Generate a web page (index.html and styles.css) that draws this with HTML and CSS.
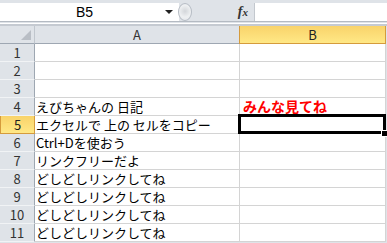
FILE: index.html
```html
<!DOCTYPE html>
<html>
<head>
    <title>Sheet1</title>
    <link rel="stylesheet" href="styles.css">
</head>
<body>
    <div class="bar">
        <div class="namebox">
            <span class="name">B5</span>
            <span class="arrow"></span>
        </div>
        <div class="splitter"></div>
        <div class="fx">f<i>x</i></div>
        <div class="formula"></div>
    </div>
    <div class="bar-line"></div>

    <div class="sheet">
        <div class="hd corner"><span class="tri"></span></div>
        <div class="hd col">A</div>
        <div class="hd col sel">B</div>

        <div class="hd row">1</div><div class="cell"></div><div class="cell"></div>
        <div class="hd row">2</div><div class="cell"></div><div class="cell"></div>
        <div class="hd row">3</div><div class="cell"></div><div class="cell"></div>
        <div class="hd row">4</div><div class="cell">えびちゃんの 日記</div><div class="cell note">みんな見てね</div>
        <div class="hd row sel">5</div><div class="cell">エクセルで 上の セルをコピー</div><div class="cell active"></div>
        <div class="hd row">6</div><div class="cell">Ctrl+Dを使おう</div><div class="cell"></div>
        <div class="hd row">7</div><div class="cell">リンクフリーだよ</div><div class="cell"></div>
        <div class="hd row">8</div><div class="cell">どしどしリンクしてね</div><div class="cell"></div>
        <div class="hd row">9</div><div class="cell">どしどしリンクしてね</div><div class="cell"></div>
        <div class="hd row">10</div><div class="cell">どしどしリンクしてね</div><div class="cell"></div>
        <div class="hd row">11</div><div class="cell">どしどしリンクしてね</div><div class="cell"></div>
    </div>
</body>
</html>
```
FILE: styles.css
```css
body {
    margin: 0;
    background-color: #dfe3e8;
    font-family: "Noto Sans CJK JP", sans-serif;
    font-size: 13px;
    overflow: hidden;
}

.bar {
    display: flex;
    height: 18px;
    padding-top: 3px;
    border-bottom: 1px solid #b4bac2;
    box-sizing: content-box;
}

.namebox {
    width: 179px;
    background-color: #fff;
    display: flex;
    align-items: center;
}

.name {
    flex: 1;
    text-align: center;
    font-family: "Liberation Sans", sans-serif;
    font-size: 14px;
    color: #000;
    padding-left: 4px;
}

.arrow {
    width: 0;
    height: 0;
    border-left: 4px solid transparent;
    border-right: 4px solid transparent;
    border-top: 4px solid #222;
    margin-right: 6px;
}

.splitter {
    width: 14px;
    height: 18px;
    border-radius: 50%;
    border: 1px solid #b6bcc4;
    box-sizing: border-box;
    background: radial-gradient(circle at 50% 45%, #d3d6da 0, #eef0f2 55%, #e2e5e9 100%);
    margin-left: -1px;
}

.fx {
    width: 62px;
    padding-right: 6px;
    text-align: right;
    font-family: "Liberation Serif", serif;
    font-style: italic;
    font-weight: bold;
    font-size: 14px;
    line-height: 18px;
    color: #333;
    box-sizing: border-box;
}

.fx i {
    font-size: 11px;
}

.formula {
    flex: 1;
    background-color: #fff;
    border-left: 1px solid #c3c8ce;
}

.bar-line {
    height: 1px;
    background-color: #fff;
    border-bottom: 2px solid #c5cad1;
    margin-top: 1px;
}

.sheet {
    display: grid;
    grid-template-columns: 35px 205px 146px;
    grid-auto-rows: 18px;
}

.hd {
    background-color: #dfe3e8;
    color: #333;
    text-align: center;
    line-height: 17px;
    border-right: 1px solid #c0c6cd;
    border-bottom: 1px solid #c0c6cd;
    box-sizing: border-box;
}

.hd.row {
    border-bottom-color: #f1f3f5;
    border-right-color: #9ea7b2;
}

.hd.col {
    border-bottom-color: #9ea7b2;
}

.corner {
    position: relative;
    border-right-color: #c0c6cd;
    border-bottom-color: #9ea7b2;
}

.tri {
    position: absolute;
    right: 3px;
    bottom: 3px;
    width: 0;
    height: 0;
    border-left: 10px solid transparent;
    border-bottom: 10px solid #b9bec5;
}

.hd.sel {
    background: linear-gradient(#f9d36a, #ffe886);
    border-right: 1px solid #d59b3c;
    border-bottom: 1px solid #d59b3c;
    border-left: 1px solid #d59b3c;
    color: #222;
}

.hd.col.sel {
    margin-left: -1px;
}

.cell {
    background-color: #fff;
    border-right: 1px solid #d4d4d4;
    border-bottom: 1px solid #d4d4d4;
    box-sizing: border-box;
    line-height: 17px;
    padding-left: 1px;
    white-space: nowrap;
    color: #000;
}

.note {
    color: #f00;
    font-weight: bold;
    font-size: 14px;
    padding-left: 3px;
}

.active {
    position: relative;
}

.active::before {
    content: "";
    position: absolute;
    left: -2px;
    top: -2px;
    right: -1px;
    bottom: -1px;
    border: 3px solid #000;
}

.active::after {
    content: "";
    position: absolute;
    right: -3px;
    bottom: -4px;
    width: 5px;
    height: 5px;
    background-color: #000;
    border: 1px solid #fff;
}
```
